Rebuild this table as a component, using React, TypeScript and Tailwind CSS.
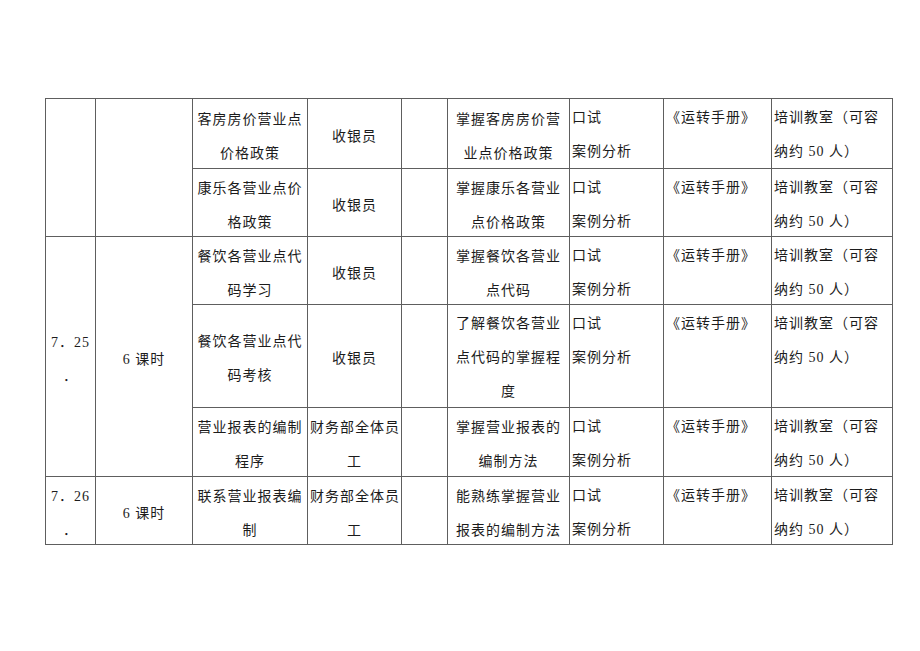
import React from "react"

type Cell = {
  lines?: string[]
  rowSpan?: number
  align?: "center" | "left"
  valign?: "top" | "middle"
}

const cellBase = "border border-[#5e5e5e] px-[2px] py-0"

function TCell({ cell }: { cell: Cell }) {
  const align = cell.align === "left" ? "text-left" : "text-center"
  const top = cell.valign === "top"
  return (
    <td rowSpan={cell.rowSpan} className={`${cellBase} ${align} ${top ? "align-top" : "align-middle"}`}>
      {cell.lines && (
        <div className={top ? "pt-[2px] -mb-[6px] leading-[34px]" : "-mt-[1px] -mb-[5px] pt-[2px] leading-[34px]"}>
          {cell.lines.map((l, i) => (
            <div key={i} className="whitespace-nowrap">
              {l}
            </div>
          ))}
        </div>
      )}
    </td>
  )
}

// shared cells for the last three columns
const method: Cell = { lines: ["口试", "案例分析"], align: "left", valign: "top" }
const book: Cell = { lines: ["《运转手册》"], align: "left", valign: "top" }
const room: Cell = { lines: ["培训教室（可容", "纳约 50 人）"], align: "left", valign: "top" }
const blank: Cell = {}

const rows: { h: string; cells: Cell[] }[] = [
  {
    h: "h-[70px]",
    cells: [
      { rowSpan: 2 },
      { rowSpan: 2 },
      { lines: ["客房房价营业点", "价格政策"] },
      { lines: ["收银员"] },
      blank,
      { lines: ["掌握客房房价营", "业点价格政策"] },
      method,
      book,
      room,
    ],
  },
  {
    h: "h-[68px]",
    cells: [
      { lines: ["康乐各营业点价", "格政策"] },
      { lines: ["收银员"] },
      blank,
      { lines: ["掌握康乐各营业", "点价格政策"] },
      method,
      book,
      room,
    ],
  },
  {
    h: "h-[68px]",
    cells: [
      { rowSpan: 3, lines: ["7．25", "．"] },
      { rowSpan: 3, lines: ["6 课时"] },
      { lines: ["餐饮各营业点代", "码学习"] },
      { lines: ["收银员"] },
      blank,
      { lines: ["掌握餐饮各营业", "点代码"] },
      method,
      book,
      room,
    ],
  },
  {
    h: "h-[103px]",
    cells: [
      { lines: ["餐饮各营业点代", "码考核"] },
      { lines: ["收银员"] },
      blank,
      { lines: ["了解餐饮各营业", "点代码的掌握程", "度"], valign: "top" },
      method,
      book,
      room,
    ],
  },
  {
    h: "h-[69px]",
    cells: [
      { lines: ["营业报表的编制", "程序"] },
      { lines: ["财务部全体员", "工"] },
      blank,
      { lines: ["掌握营业报表的", "编制方法"] },
      method,
      book,
      room,
    ],
  },
  {
    h: "h-[68px]",
    cells: [
      { lines: ["7．26", "．"] },
      { lines: ["6 课时"] },
      { lines: ["联系营业报表编", "制"] },
      { lines: ["财务部全体员", "工"] },
      blank,
      { lines: ["能熟练掌握营业", "报表的编制方法"] },
      method,
      book,
      room,
    ],
  },
]

const widths = [50, 97, 115, 94, 46, 122, 94, 108, 121]

export default function App() {
  return (
    <div className="min-h-[651px] w-[920px] bg-white pt-[98px] pl-[45px] text-[14px] tracking-[1px] text-[#1c1c1c] [font-family:'Liberation_Serif','Noto_Sans_CJK_SC',serif]">
      <table className="table-fixed border-collapse w-[847px]">
        <colgroup>
          {widths.map((w, i) => (
            <col key={i} style={{ width: w }} />
          ))}
        </colgroup>
        <tbody>
          {rows.map((r, i) => (
            <tr key={i} className={r.h}>
              {r.cells.map((c, j) => (
                <TCell key={j} cell={c} />
              ))}
            </tr>
          ))}
        </tbody>
      </table>
    </div>
  )
}
